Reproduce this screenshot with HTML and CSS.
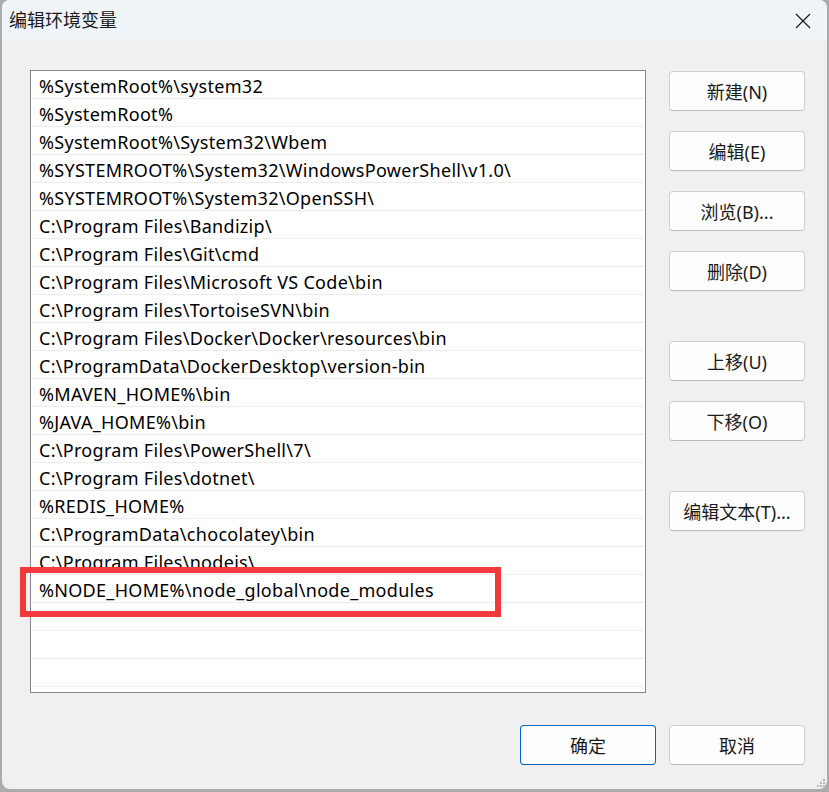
FILE: index.html
```html
<!DOCTYPE html>
<html lang="zh-CN">
<head>
<meta charset="utf-8">
<title>编辑环境变量</title>
<link rel="stylesheet" href="styles.css">
</head>
<body>
<div class="dialog">
  <div class="titlebar">
    <span class="title">编辑环境变量</span>
    <span class="close">
      <svg width="16" height="16" viewBox="0 0 16 16"><path d="M1 1 L15 15 M15 1 L1 15" stroke="#1a1a1a" stroke-width="1.2" fill="none"/></svg>
    </span>
  </div>
  <div class="body">
    <div class="main">
      <div class="listbox">
        <div class="row">%SystemRoot%\system32</div>
        <div class="row">%SystemRoot%</div>
        <div class="row">%SystemRoot%\System32\Wbem</div>
        <div class="row">%SYSTEMROOT%\System32\WindowsPowerShell\v1.0\</div>
        <div class="row">%SYSTEMROOT%\System32\OpenSSH\</div>
        <div class="row">C:\Program Files\Bandizip\</div>
        <div class="row">C:\Program Files\Git\cmd</div>
        <div class="row">C:\Program Files\Microsoft VS Code\bin</div>
        <div class="row">C:\Program Files\TortoiseSVN\bin</div>
        <div class="row">C:\Program Files\Docker\Docker\resources\bin</div>
        <div class="row">C:\ProgramData\DockerDesktop\version-bin</div>
        <div class="row">%MAVEN_HOME%\bin</div>
        <div class="row">%JAVA_HOME%\bin</div>
        <div class="row">C:\Program Files\PowerShell\7\</div>
        <div class="row">C:\Program Files\dotnet\</div>
        <div class="row">%REDIS_HOME%</div>
        <div class="row">C:\ProgramData\chocolatey\bin</div>
        <div class="row">C:\Program Files\nodejs\</div>
        <div class="row">%NODE_HOME%\node_global\node_modules</div>
        <div class="row"></div>
        <div class="row"></div>
        <div class="row"></div>
      </div>
      <div class="side">
        <div class="group">
          <button class="btn">新建(N)</button>
          <button class="btn">编辑(E)</button>
          <button class="btn">浏览(B)...</button>
          <button class="btn">删除(D)</button>
        </div>
        <div class="group">
          <button class="btn">上移(U)</button>
          <button class="btn">下移(O)</button>
        </div>
        <div class="group">
          <button class="btn">编辑文本(T)...</button>
        </div>
      </div>
    </div>
    <div class="footer">
      <button class="btn primary">确定</button>
      <button class="btn">取消</button>
    </div>
  </div>
  <div class="highlight"></div>
  <svg class="grip" width="10" height="10" viewBox="0 0 10 10">
    <rect x="7" y="1" width="2" height="2" fill="#b8b8b8"/>
    <rect x="4" y="4" width="2" height="2" fill="#b8b8b8"/>
    <rect x="7" y="4" width="2" height="2" fill="#b8b8b8"/>
    <rect x="1" y="7" width="2" height="2" fill="#b8b8b8"/>
    <rect x="4" y="7" width="2" height="2" fill="#b8b8b8"/>
    <rect x="7" y="7" width="2" height="2" fill="#b8b8b8"/>
  </svg>
</div>
</body>
</html>
```

FILE: styles.css
```css
html, body {
  margin: 0;
  padding: 0;
}
body {
  background: #ababab;
  width: 829px;
  height: 792px;
  overflow: hidden;
  font-family: "Noto Sans", "Noto Sans CJK SC", sans-serif;
}
.dialog {
  position: relative;
  margin-left: 2px;
  width: 825px;
  height: 789px;
  background: #f0f0f0;
  border-radius: 8px;
  overflow: hidden;
  display: flex;
  flex-direction: column;
}
.titlebar {
  height: 40px;
  flex: none;
  background: #eff4f9;
  display: flex;
  align-items: center;
  justify-content: space-between;
  padding-left: 7px;
}
.title {
  font-family: "Noto Sans CJK SC", sans-serif;
  font-size: 18px;
  color: #1a1a1a;
  margin-top: -2px;
}
.close {
  width: 16px;
  height: 16px;
  margin-right: 16px;
  margin-top: 1px;
  display: flex;
}
.body {
  flex: 1;
  padding: 30px 0 0 28px;
  display: flex;
  flex-direction: column;
}
.main {
  display: flex;
  align-items: flex-start;
}
.listbox {
  width: 614px;
  height: 621px;
  border: 1px solid #828790;
  background: #ffffff;
  overflow: hidden;
}
.row {
  height: 27px;
  border-bottom: 1px solid #ececec;
  margin: 0 1px;
  padding-left: 7px;
  font-size: 18px;
  letter-spacing: 0.3px;
  line-height: 30px;
  color: #000;
  white-space: nowrap;
  overflow: hidden;
}
.side {
  margin-left: 23px;
  margin-top: 1px;
  display: flex;
  flex-direction: column;
  gap: 50px;
}
.group {
  display: flex;
  flex-direction: column;
  gap: 20px;
}
.btn {
  width: 136px;
  height: 40px;
  box-sizing: border-box;
  border: 1px solid #d0d0d0;
  border-bottom-color: #bcbcbc;
  border-radius: 4px;
  background: #fdfdfd;
  font-family: "Noto Sans", "Noto Sans CJK SC", sans-serif;
  font-size: 18px;
  color: #1a1a1a;
  padding: 0;
}
.footer {
  margin-top: 32px;
  display: flex;
  gap: 13px;
  padding-left: 490px;
}
.btn.primary {
  border: 1px solid #0067c0;
  border-bottom-color: #005ba8;
}
.highlight {
  position: absolute;
  left: 18px;
  top: 567px;
  width: 469px;
  height: 38px;
  border: 6px solid #f23a3c;
}
.grip {
  position: absolute;
  right: 1px;
  bottom: 1px;
}
```
